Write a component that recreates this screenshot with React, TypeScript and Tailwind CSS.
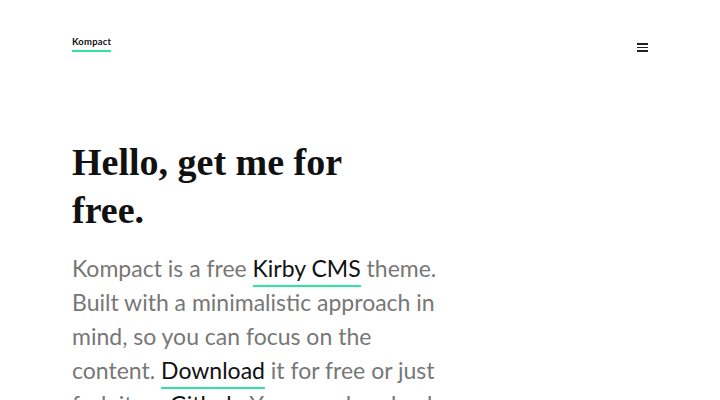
import React from 'react';

const Link: React.FC<{ children: React.ReactNode }> = ({ children }) => (
  <a href="#" className="text-[#111] border-b-2 border-[#2ee59d] pb-[3px]">
    {children}
  </a>
);

const App: React.FC = () => {
  return (
    <div className="min-h-screen bg-white font-['Lato',sans-serif]">
      {/* Header */}
      <header className="flex items-start justify-between px-[72px] pt-[36px]">
        <a href="#" className="text-[9.5px] font-bold text-[#111] tracking-[0.02em] border-b-2 border-[#2ee59d] leading-[12px] pb-[2px]">
          Kompact
        </a>
        <button className="flex flex-col gap-[2px] w-[11px] mt-[7px]" aria-label="Menu">
          <span className="block h-[1.5px] w-full bg-[#222]" />
          <span className="block h-[1.5px] w-full bg-[#222]" />
          <span className="block h-[1.5px] w-full bg-[#222]" />
        </button>
      </header>

      {/* Hero */}
      <main className="px-[72px] pt-[86px]">
        <h1 className="max-w-[300px] text-[38px] leading-[48px] font-bold text-[#111] font-['Liberation_Serif',serif]">
          Hello, get me for free.
        </h1>
        <p className="mt-[17px] text-[23px] leading-[34px] text-[#777]">
          Kompact is a free <Link>Kirby CMS</Link> theme.
          <br />
          Built with a minimalistic approach in
          <br />
          mind, so you can focus on the
          <br />
          content. <Link>Download</Link> it for free or just
          <br />
          fork it on <Link>Github</Link>. You can also check
        </p>
      </main>
    </div>
  );
};

export default App;
